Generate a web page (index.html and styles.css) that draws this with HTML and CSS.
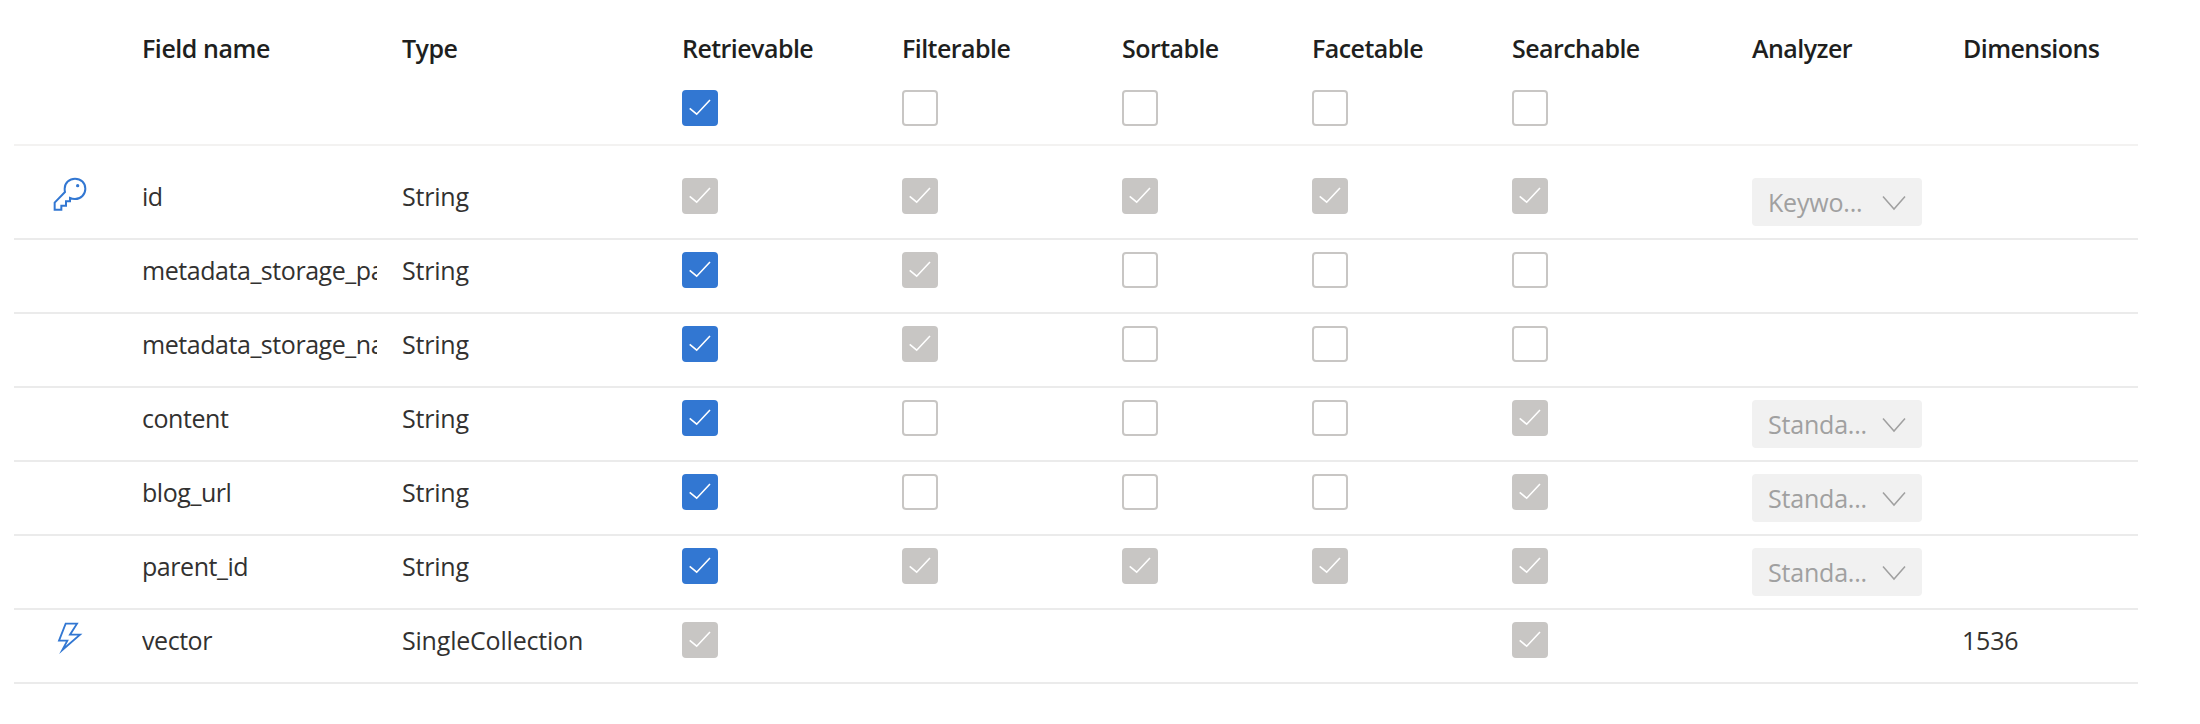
FILE: index.html
```html
<!DOCTYPE html>
<html lang="en">
<head>
<meta charset="utf-8">
<title>Index fields</title>
<link rel="stylesheet" href="styles.css">
</head>
<body>
<svg class="defs" aria-hidden="true">
  <symbol id="check" viewBox="0 0 36 36"><path d="M7.7 18.3 14.7 24.2 28 10" fill="none" stroke="currentColor" stroke-width="1.6"/></symbol>
  <symbol id="chev" viewBox="0 0 24 16"><path d="M1 1.5 12 14 23 1.5" fill="none" stroke="currentColor" stroke-width="1.5"/></symbol>
</svg>
<main class="fields">
  <div class="row head">
    <span></span>
    <div class="hcell hname">Field name</div>
    <div class="hcell">Type</div>
    <div class="hcell">Retrievable<i class="box on"><svg><use href="#check"/></svg></i></div>
    <div class="hcell">Filterable<i class="box"></i></div>
    <div class="hcell">Sortable<i class="box"></i></div>
    <div class="hcell">Facetable<i class="box"></i></div>
    <div class="hcell">Searchable<i class="box"></i></div>
    <div class="hcell">Analyzer</div>
    <div class="hcell">Dimensions</div>
  </div>

  <div class="row first">
    <svg class="ico key" viewBox="60 45 120 120"><path d="M105 96 74 128V149H94V137H108V124H120V114C124 116 130 117 135 117 153 117 166 103 166 86 166 69 153 56 135 56 118 56 104 69 104 86 104 90 104 93 105 96Z" fill="none" stroke="currentColor" stroke-width="6"/><circle cx="143" cy="77" r="5" fill="currentColor"/></svg>
    <div class="name">id</div>
    <div class="type">String</div>
    <i class="box dis"><svg><use href="#check"/></svg></i>
    <i class="box dis"><svg><use href="#check"/></svg></i>
    <i class="box dis"><svg><use href="#check"/></svg></i>
    <i class="box dis"><svg><use href="#check"/></svg></i>
    <i class="box dis"><svg><use href="#check"/></svg></i>
    <div class="drop"><span>Keywo...</span><svg><use href="#chev"/></svg></div>
    <span></span>
  </div>

  <div class="row">
    <span></span>
    <div class="name">metadata_storage_path</div>
    <div class="type">String</div>
    <i class="box on"><svg><use href="#check"/></svg></i>
    <i class="box dis"><svg><use href="#check"/></svg></i>
    <i class="box"></i>
    <i class="box"></i>
    <i class="box"></i>
    <span></span>
    <span></span>
  </div>

  <div class="row">
    <span></span>
    <div class="name">metadata_storage_name</div>
    <div class="type">String</div>
    <i class="box on"><svg><use href="#check"/></svg></i>
    <i class="box dis"><svg><use href="#check"/></svg></i>
    <i class="box"></i>
    <i class="box"></i>
    <i class="box"></i>
    <span></span>
    <span></span>
  </div>

  <div class="row">
    <span></span>
    <div class="name">content</div>
    <div class="type">String</div>
    <i class="box on"><svg><use href="#check"/></svg></i>
    <i class="box"></i>
    <i class="box"></i>
    <i class="box"></i>
    <i class="box dis"><svg><use href="#check"/></svg></i>
    <div class="drop"><span>Standa...</span><svg><use href="#chev"/></svg></div>
    <span></span>
  </div>

  <div class="row">
    <span></span>
    <div class="name">blog_url</div>
    <div class="type">String</div>
    <i class="box on"><svg><use href="#check"/></svg></i>
    <i class="box"></i>
    <i class="box"></i>
    <i class="box"></i>
    <i class="box dis"><svg><use href="#check"/></svg></i>
    <div class="drop"><span>Standa...</span><svg><use href="#chev"/></svg></div>
    <span></span>
  </div>

  <div class="row">
    <span></span>
    <div class="name">parent_id</div>
    <div class="type">String</div>
    <i class="box on"><svg><use href="#check"/></svg></i>
    <i class="box dis"><svg><use href="#check"/></svg></i>
    <i class="box dis"><svg><use href="#check"/></svg></i>
    <i class="box dis"><svg><use href="#check"/></svg></i>
    <i class="box dis"><svg><use href="#check"/></svg></i>
    <div class="drop"><span>Standa...</span><svg><use href="#chev"/></svg></div>
    <span></span>
  </div>

  <div class="row">
    <svg class="ico bolt" viewBox="60 21 120 120"><path d="M107 41H141L120 74H150L97 120 112 92H87Z" fill="none" stroke="currentColor" stroke-width="5.5" stroke-miterlimit="10"/></svg>
    <div class="name">vector</div>
    <div class="type">SingleCollection</div>
    <i class="box dis"><svg><use href="#check"/></svg></i>
    <span></span>
    <span></span>
    <span></span>
    <i class="box dis"><svg><use href="#check"/></svg></i>
    <span></span>
    <div class="dim">1536</div>
  </div>
</main>
</body>
</html>
```
FILE: styles.css
```css
* { box-sizing: border-box; }
html, body { margin: 0; background: #fff; }
body {
  font-family: "Open Sans", "Noto Sans", sans-serif;
  font-size: 25px;
  letter-spacing: -0.2px;
  line-height: 36px;
  color: #323130;
}
.defs { display: none; }
.fields { margin-left: 14px; width: 2124px; }
.row {
  display: grid;
  grid-template-columns: 129px 259px 280px 220px 220px 190px 200px 240px 211px 175px;
  align-items: start;
  height: 74px;
  padding-top: 12px;
  border-bottom: 2px solid #ebebeb;
}
.head { height: 146px; padding-top: 30px; border-bottom-color: #f3f2f1; }
.first { height: 94px; padding-top: 32px; }
.hcell { font-weight: 600; letter-spacing: -0.55px; color: #201f1e; }
.hcell .box { margin-top: 24px; }
.hname { margin-left: -1px; letter-spacing: -0.45px; }
.name { overflow: hidden; white-space: nowrap; width: 235px; margin-left: -1px; letter-spacing: -0.45px; }
.dim { margin-left: -1px; }
.box {
  display: block;
  width: 36px;
  height: 36px;
  border: 2px solid #c8c6c4;
  border-radius: 4px;
  background: #fff;
}
.box svg { display: block; width: 36px; height: 36px; margin: -2px; color: #fff; }
.on { background: #3277d2; border-color: #3277d2; }
.dis { background: #c8c6c4; }
.ico { display: block; width: 40px; height: 40px; margin-left: 36px; color: #3277d2; }
.key { margin-top: -3px; }
.bolt { margin-top: -5px; }
.drop {
  display: flex;
  align-items: center;
  justify-content: space-between;
  width: 170px;
  height: 48px;
  padding: 0 16px 0 16px;
  border-radius: 4px;
  background: #f1f1f1;
  color: #a0a0a0;
}
.drop svg { width: 24px; height: 16px; margin-top: 2px; color: #a0a0a0; }
```
